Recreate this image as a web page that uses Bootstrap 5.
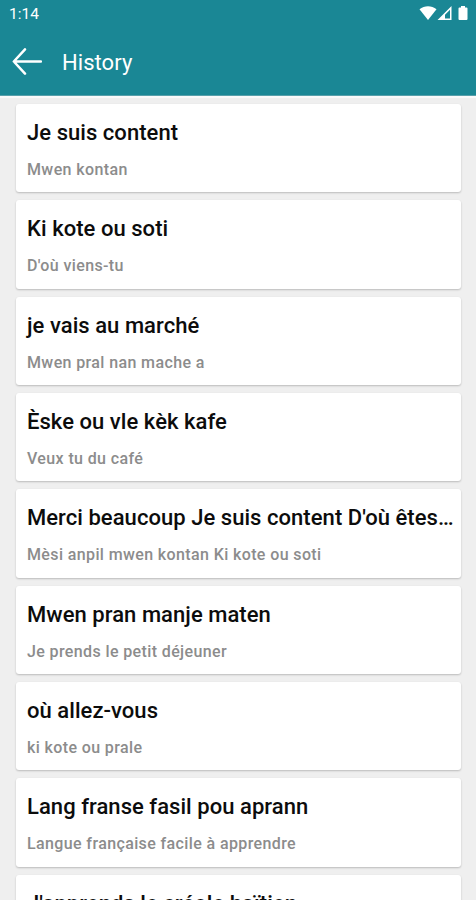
<!DOCTYPE html>
<html lang="fr">
<head>
<meta charset="utf-8">
<meta name="viewport" content="width=device-width, initial-scale=1">
<title>History</title>
<link href="https://cdn.jsdelivr.net/npm/bootstrap@5.3.0/dist/css/bootstrap.min.css" rel="stylesheet">
<style>
  body { font-family: Roboto, "Liberation Sans", sans-serif; background: #efefef; height: 900px; }
  .app-top { background: #1a8795; height: 96px; border-bottom: 1px solid #57a0ab; box-shadow: 0 2px 1px #fafafa; }
  .status-row { height: 28px; padding: 0 7px 0 9px; }
  .clock { font-size: 15.5px; line-height: 28px; }
  .title-row { height: 68px; padding-left: 12px; gap: 20px; }
  .page-title { font-size: 22px; line-height: 28px; letter-spacing: .05px; padding-top: 1px; }
  .history { padding: 8px 15px 0 16px; gap: 8.1px; }
  .entry { height: 88.25px; padding: 14px 6px 0 9px; border-radius: 3px; box-shadow: 0 1px 2px rgba(0,0,0,.22); }
  .phrase { font-size: 22px; line-height: 29px; font-weight: 500; color: #0c0c0c; letter-spacing: .05px; padding-left: 2px; }
  .meaning { font-size: 16px; line-height: 20px; margin-top: 13px; font-weight: 500; color: #8c8c8c; letter-spacing: .38px; padding-left: 2px; }
</style>
</head>
<body class="overflow-hidden d-flex flex-column">
<header class="app-top text-white flex-shrink-0">
  <div class="status-row d-flex align-items-center justify-content-between">
    <span class="clock">1:14</span>
    <svg width="50" height="16" viewBox="0 0 50 16" fill="#fff" aria-hidden="true">
      <path d="M.5 3.200C5.500-.7 12.500-.7 17.500 3.200L9 14z"/>
      <path fill-rule="evenodd" d="M18.500 14L32.500 0V14zM26 8.800V12.500H31V3.800z"/>
      <path d="M40.500 1.500H42V0H46V1.500H47.500Q48.500 1.500 48.500 2.500V13Q48.500 14 47.500 14H40.500Q39.500 14 39.500 13V2.500Q39.500 1.500 40.500 1.500z"/>
    </svg>
  </div>
  <div class="title-row d-flex align-items-center">
    <svg width="30" height="28" viewBox="0 0 30 28" fill="none" stroke="#fff" stroke-width="2.500" stroke-linecap="round" stroke-linejoin="round" role="img" aria-label="Back"><path d="M29 13.500H2M13 1.300L1.800 13.500L13 25.700"/></svg>
    <h1 class="page-title fw-normal mb-0">History</h1>
  </div>
</header>
<main class="history d-flex flex-column">
  <article class="entry bg-white flex-shrink-0"><div class="phrase text-truncate">Je suis content</div><div class="meaning text-truncate">Mwen kontan</div></article>
  <article class="entry bg-white flex-shrink-0"><div class="phrase text-truncate">Ki kote ou soti</div><div class="meaning text-truncate">D'où viens-tu</div></article>
  <article class="entry bg-white flex-shrink-0"><div class="phrase text-truncate">je vais au marché</div><div class="meaning text-truncate">Mwen pral nan mache a</div></article>
  <article class="entry bg-white flex-shrink-0"><div class="phrase text-truncate">Èske ou vle kèk kafe</div><div class="meaning text-truncate">Veux tu du café</div></article>
  <article class="entry bg-white flex-shrink-0"><div class="phrase text-truncate">Merci beaucoup Je suis content D'où êtes…</div><div class="meaning text-truncate">Mèsi anpil mwen kontan Ki kote ou soti</div></article>
  <article class="entry bg-white flex-shrink-0"><div class="phrase text-truncate">Mwen pran manje maten</div><div class="meaning text-truncate">Je prends le petit déjeuner</div></article>
  <article class="entry bg-white flex-shrink-0"><div class="phrase text-truncate">où allez-vous</div><div class="meaning text-truncate">ki kote ou prale</div></article>
  <article class="entry bg-white flex-shrink-0"><div class="phrase text-truncate">Lang franse fasil pou aprann</div><div class="meaning text-truncate">Langue française facile à apprendre</div></article>
  <article class="entry bg-white flex-shrink-0"><div class="phrase text-truncate">J'apprends le créole haïtien</div></article>
</main>
<script src="https://cdn.jsdelivr.net/npm/bootstrap@5.3.0/dist/js/bootstrap.bundle.min.js"></script>
</body>
</html>
